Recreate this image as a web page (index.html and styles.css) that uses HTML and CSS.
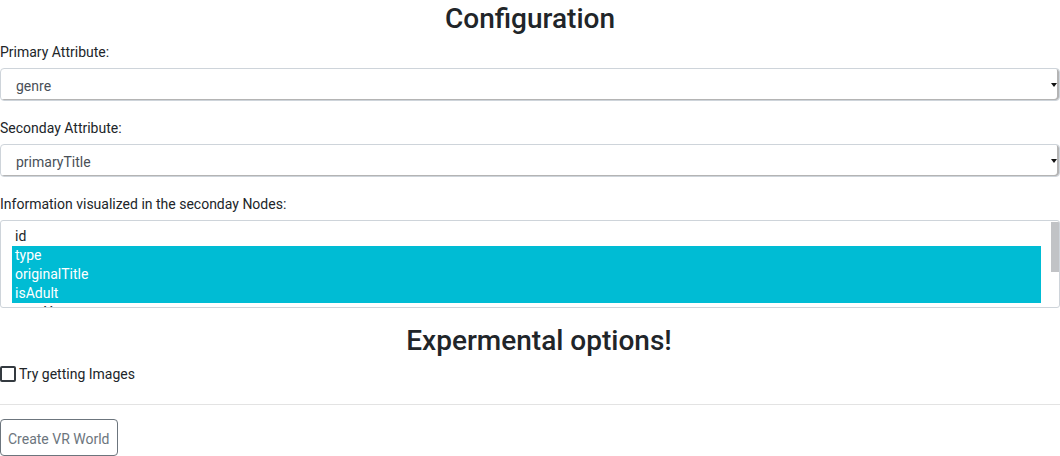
FILE: index.html
```html
<!DOCTYPE html>
<html lang="en">
<head>
<meta charset="utf-8">
<title>Configuration</title>
<link rel="stylesheet" href="styles.css">
</head>
<body>
<main class="page">
  <h3 class="title">Configuration</h3>

  <div class="form-group">
    <label class="label" for="primary">Primary Attribute:</label>
    <div class="select-wrap">
      <select id="primary" class="select">
        <option>genre</option>
      </select>
      <span class="caret"></span>
    </div>
  </div>

  <div class="form-group">
    <label class="label" for="secondary">Seconday Attribute:</label>
    <div class="select-wrap">
      <select id="secondary" class="select">
        <option>primaryTitle</option>
      </select>
      <span class="caret"></span>
    </div>
  </div>

  <div class="form-group">
    <label class="label">Information visualized in the seconday Nodes:</label>
    <div class="listbox">
      <div class="options">
        <div class="opt">id</div>
        <div class="opt sel">type</div>
        <div class="opt sel">originalTitle</div>
        <div class="opt sel">isAdult</div>
        <div class="opt">startYear</div>
        <div class="opt">endYear</div>
      </div>
      <div class="track"><div class="thumb"></div></div>
    </div>
  </div>

  <h3 class="title sub">Expermental options!</h3>

  <label class="check">
    <span class="box"></span>
    <span>Try getting Images</span>
  </label>

  <hr class="rule">

  <button class="btn" type="button">Create VR World</button>
</main>
</body>
</html>
```

FILE: styles.css
```css
html, body {
  margin: 0;
  padding: 0;
  background: #fff;
}

body {
  font-family: Roboto, "Liberation Sans", sans-serif;
  font-size: 14px;
  line-height: 21px;
  color: #212529;
}

.page {
  display: flex;
  flex-direction: column;
  align-items: stretch;
  padding-top: 2px;
}

.title {
  margin: 0 0 6px;
  font-size: 28px;
  font-weight: 500;
  line-height: 1.2;
  text-align: center;
  color: #212529;
}

.title.sub {
  margin: 0 0 6px;
  padding-left: 18px;
}

.form-group {
  display: flex;
  flex-direction: column;
  margin-bottom: 16.5px;
}

.label {
  display: block;
  margin-bottom: 5px;
  line-height: 21px;
}

.select-wrap {
  position: relative;
}

.select {
  display: block;
  width: 100%;
  height: 33.5px;
  margin: 0;
  padding: 3px 15px 0;
  -webkit-appearance: none;
  appearance: none;
  font-family: Roboto, "Liberation Sans", sans-serif;
  font-size: 14px;
  color: #495057;
  background: #fff;
  border: 1px solid #ced4da;
  border-radius: 4px;
  box-shadow: inset -2px -1px 0 #b4b4b4;
  outline: none;
}

.caret {
  position: absolute;
  right: 3px;
  top: 15px;
  width: 0;
  height: 0;
  border-left: 3px solid transparent;
  border-right: 3px solid transparent;
  border-top: 4px solid #111;
}

.listbox {
  display: flex;
  height: 88px;
  box-sizing: border-box;
  border: 1px solid #ced4da;
  border-radius: 3px;
  overflow: hidden;
}

.options {
  flex: 1;
  padding: 6px 10px 0 11px;
  overflow: hidden;
}

.opt {
  height: 19px;
  line-height: 19px;
  padding-left: 3px;
  color: #212529;
  white-space: nowrap;
}

.opt.sel {
  background: #00bcd4;
  color: #fff;
}

.track {
  width: 8px;
  flex: none;
  padding-top: 1px;
}

.thumb {
  height: 50px;
  background: #c1c3c6;
}

.check {
  display: flex;
  align-items: center;
  gap: 3px;
  line-height: 21px;
}

.box {
  width: 12px;
  height: 12px;
  border: 2px solid #343a40;
  border-radius: 2px;
  flex: none;
}

.rule {
  width: 100%;
  margin: 19px 0 14px;
  border: 0;
  border-top: 1px solid #e3e3e3;
}

.btn {
  align-self: flex-start;
  height: 37px;
  padding: 4px 7px 0;
  font-family: Roboto, "Liberation Sans", sans-serif;
  font-size: 14px;
  color: #6c757d;
  background: #fff;
  border: 1px solid #6c757d;
  border-radius: 4px;
}
```
